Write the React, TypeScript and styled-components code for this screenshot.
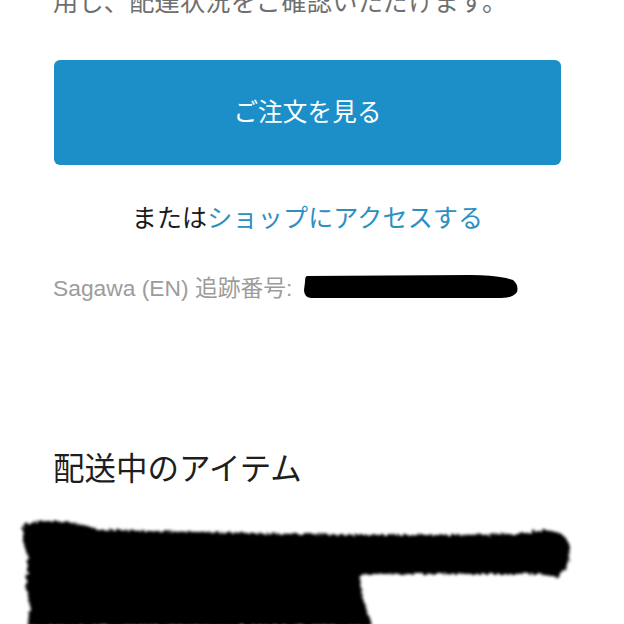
import React from 'react';
import styled, { createGlobalStyle } from 'styled-components';

const GlobalStyle = createGlobalStyle`
  html, body {
    margin: 0;
    padding: 0;
    background: #ffffff;
    overflow: hidden;
  }
  body {
    font-family: "Liberation Sans", "Noto Sans CJK JP", sans-serif;
  }
`;

const Page = styled.div`
  width: 624px;
  height: 624px;
  overflow: hidden;
  display: flex;
  flex-direction: column;
`;

const Content = styled.div`
  padding: 0 63px 0 54px;
  display: flex;
  flex-direction: column;
`;

const Intro = styled.p`
  margin: -16px 0 0 -1px;
  font-family: "Noto Sans CJK JP", sans-serif;
  font-size: 25.2px;
  line-height: 32px;
  color: #6f6f6f;
  letter-spacing: 0.2px;
  white-space: nowrap;
`;

const PrimaryButton = styled.button`
  margin-top: 44px;
  height: 105px;
  width: 100%;
  border: none;
  border-radius: 6px;
  background: #1c8fc8;
  color: #ffffff;
  font-family: "Noto Sans CJK JP", sans-serif;
  font-size: 24.5px;
  letter-spacing: 0.2px;
  display: flex;
  align-items: center;
  justify-content: center;
  padding: 0 0 4px;
  cursor: pointer;
`;

const AltLine = styled.p`
  margin: 34px 0 0;
  text-align: center;
  font-family: "Noto Sans CJK JP", sans-serif;
  font-size: 25px;
  line-height: 34px;
  color: #1a1a1a;
  letter-spacing: 0.2px;
`;

const Link = styled.a`
  color: #2b8fc2;
  text-decoration: none;
`;

const TrackingRow = styled.div`
  margin-top: 38px;
  display: flex;
  align-items: center;
  gap: 9px;
  height: 30px;
`;

const TrackingLabel = styled.span`
  font-size: 22.8px;
  color: #9c9c9c;
  white-space: nowrap;
  margin-left: -1px;
`;

const Heading = styled.h2`
  margin: 145px 0 0;
  font-family: "Noto Sans CJK JP", sans-serif;
  font-weight: 400;
  font-size: 31.5px;
  line-height: 40px;
  color: #1e1e1e;
  white-space: nowrap;
  margin-left: -1px;
`;

const Scribble = styled.svg`
  display: block;
  margin-top: 30px;
  flex-shrink: 0;
`;

const Redaction: React.FC<{ width: number; height: number; d: string; blur?: number }> = ({
  width,
  height,
  d,
  blur = 1.2,
}) => {
  const id = `rough-${width}-${height}`;
  return (
    <svg width={width} height={height} viewBox={`0 0 ${width} ${height}`} style={{ display: 'block', flexShrink: 0 }}>
      <defs>
        <filter id={id}>
          <feGaussianBlur stdDeviation={blur} />
        </filter>
      </defs>
      <path d={d} fill="#000" filter={`url(#${id})`} />
    </svg>
  );
};

export default function App() {
  return (
    <>
      <GlobalStyle />
      <Page>
        <Content>
          <Intro>用し、配達状況をご確認いただけます。</Intro>
          <PrimaryButton>ご注文を見る</PrimaryButton>
          <AltLine>
            または<Link href="#">ショップにアクセスする</Link>
          </AltLine>
          <TrackingRow>
            <TrackingLabel>Sagawa (EN) 追跡番号:</TrackingLabel>
            <Redaction
              width={220}
              height={28}
              blur={0.6}
              d="M6 4 L170 3 Q190 3 205 6 L212 8 Q218 13 216 20 Q212 26 200 26 L10 26 Q3 25 3 18 L4 10 Q4 4 6 4 Z"
            />
          </TrackingRow>
          <Heading>配送中のアイテム</Heading>
        </Content>
        <Scribble width={624} height={110} viewBox="0 0 624 110">
          <defs>
            <filter id="brush">
              <feTurbulence type="fractalNoise" baseFrequency="0.25" numOctaves="2" result="n" />
              <feDisplacementMap in="SourceGraphic" in2="n" scale="6" result="d" />
              <feGaussianBlur in="d" stdDeviation="1.4" />
            </filter>
          </defs>
          <path
            filter="url(#brush)"
            fill="#000"
            d="M24 8 Q60 0 100 14 L300 18 Q420 20 520 18 L545 14 Q568 16 570 32 Q570 50 558 62 L540 58 L360 58 L362 80 L372 110 L28 110 L30 90 L26 70 L28 40 L22 20 Z"
          />
        </Scribble>
      </Page>
    </>
  );
}
